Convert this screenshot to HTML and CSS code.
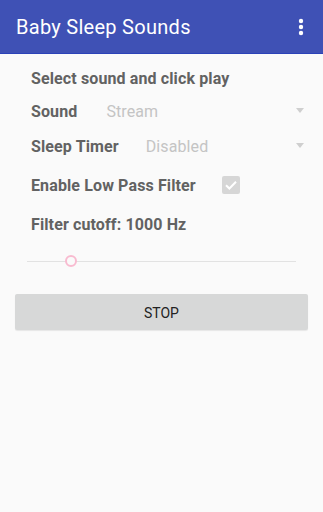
FILE: index.html
```html
<!DOCTYPE html>
<html>
<head>
<meta charset="utf-8">
<link rel="stylesheet" href="styles.css">
</head>
<body>
<header class="appbar">
  <span class="title">Baby Sleep Sounds</span>
  <svg class="overflow" width="6" height="18" viewBox="0 0 6 18"><circle cx="3" cy="3" r="2.2" fill="#fff"/><circle cx="3" cy="9" r="2.2" fill="#fff"/><circle cx="3" cy="15" r="2.2" fill="#fff"/></svg>
</header>
<main class="content">
  <div class="row r-intro"><span class="label">Select sound and click play</span></div>
  <div class="row r-sound">
    <span class="label">Sound</span>
    <span class="value v-sound">Stream</span>
    <span class="arrow"></span>
  </div>
  <div class="row r-timer">
    <span class="label">Sleep Timer</span>
    <span class="value v-timer">Disabled</span>
    <span class="arrow"></span>
  </div>
  <div class="row r-filter">
    <span class="label">Enable Low Pass Filter</span>
    <span class="checkbox">
      <svg width="18" height="18" viewBox="0 0 18 18"><path d="M4 9.2 L7.4 12.5 L14 5.8" fill="none" stroke="#fff" stroke-width="2"/></svg>
    </span>
  </div>
  <div class="row r-cutoff"><span class="label">Filter cutoff: 1000 Hz</span></div>
  <div class="slider">
    <div class="track"></div>
    <div class="thumb"></div>
  </div>
  <div class="button-wrap"><button class="btn">STOP</button></div>
</main>
</body>
</html>
```
FILE: styles.css
```css
html, body {
  margin: 0;
  padding: 0;
  background: #fafafa;
  font-family: Roboto, "Liberation Sans", sans-serif;
  height: 100%;
}
.appbar {
  height: 53px;
  background: #3f51b5;
  border-bottom: 1px solid #2b42b8;
  display: flex;
  align-items: center;
  padding: 0 19px 0 16px;
  justify-content: space-between;
}
.title {
  color: #fff;
  font-size: 20px;
  letter-spacing: 0.28px;
}
.overflow {
  display: block;
  margin-top: 1px;
}
.content {
  display: flex;
  flex-direction: column;
}
.row {
  display: flex;
  align-items: center;
  padding-left: 31px;
  padding-right: 19px;
}
.label {
  font-size: 16px;
  font-weight: bold;
  color: #626262;
  letter-spacing: 0.12px;
}
.r-intro { height: 24px; margin-top: 12px; }
.r-sound { height: 24px; margin-top: 9px; }
.r-timer { height: 24px; margin-top: 11px; }
.r-filter { height: 24px; margin-top: 15px; }
.r-cutoff { height: 24px; margin-top: 15px; }
.value {
  font-size: 16px;
  color: #c4c4c4;
  flex: 1;
  letter-spacing: 0.1px;
}
.v-sound { margin-left: 29px; }
.v-timer { margin-left: 27px; }
.arrow {
  width: 0;
  height: 0;
  border-left: 4.5px solid transparent;
  border-right: 4.5px solid transparent;
  border-top: 5px solid #cfcfcf;
  margin-bottom: 1px;
}
.checkbox {
  width: 18px;
  height: 18px;
  border-radius: 2px;
  background: #d6d6d6;
  margin-left: 26px;
  display: flex;
}
.slider {
  position: relative;
  height: 24px;
  margin: 13px 27px 0 27px;
}
.track {
  position: absolute;
  left: 0;
  right: 0;
  top: 12px;
  height: 1px;
  background: #e2e2e2;
}
.thumb {
  position: absolute;
  left: 38px;
  top: 6px;
  width: 8px;
  height: 8px;
  border: 2px solid #f8bbd0;
  border-radius: 50%;
  background: #fafafa;
}
.button-wrap {
  padding: 0 15px;
  margin-top: 21px;
}
.btn {
  width: 100%;
  height: 36px;
  border: none;
  border-radius: 2px;
  background: #d7d8d8;
  color: #222;
  font-family: Roboto, "Liberation Sans", sans-serif;
  font-size: 14px;
  padding: 2px 0 0 0;
  box-shadow: 0 1px 1px rgba(0,0,0,0.08);
}
```
